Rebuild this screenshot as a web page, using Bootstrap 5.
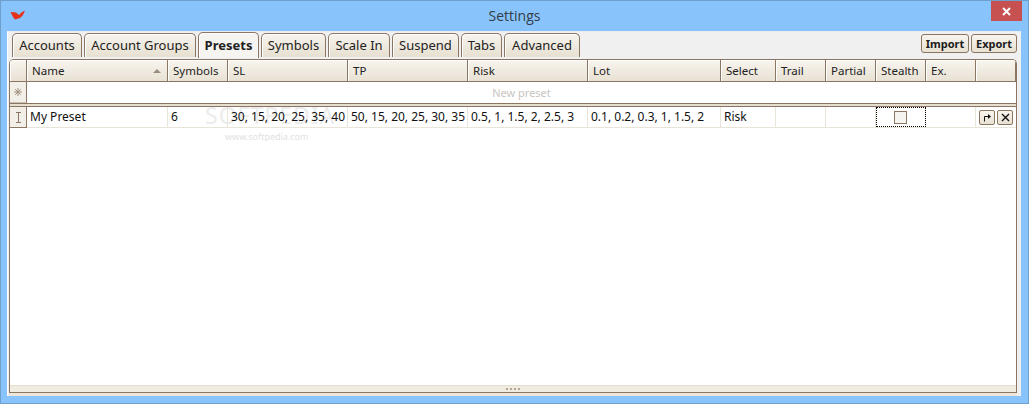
<!DOCTYPE html>
<html lang="en">
<head>
<meta charset="utf-8">
<title>Settings</title>
<link href="https://cdn.jsdelivr.net/npm/bootstrap@5.3.0/dist/css/bootstrap.min.css" rel="stylesheet">
<style>
html,body{margin:0;height:404px;overflow:hidden;background:#88c3fb;}
body{font-family:"Noto Sans","Liberation Sans",sans-serif;font-size:12px;color:#1c1c1c;}
.win{width:1029px;height:404px;border:1px solid #6f9fcb;background:#88c3fb;position:relative;}
.titlebar{height:30px;}
.win-title{font-family:"Open Sans","Noto Sans",sans-serif;font-size:14px;color:#333c47;line-height:30px;}
.logo-slot{width:60px;padding-left:9px;}
.app-logo{display:block;width:16px;height:10px;margin-top:-3px;}
.close-x{width:31px;height:20px;background:#c75050;margin:0 6px 0 23px;align-self:flex-start;}
.panel{margin:0 7px 0 6px;height:365px;background:#f0f0f0;border-left:1px solid #fff;border-top:1px solid #e6ecf2;padding:1px 4px 0 1px;}
.tabbar{height:26px;padding-left:3px;}
.wtab{height:24px;margin-right:2px;background:linear-gradient(#f7f4ee,#e7e0d1);border:1px solid #8b7563;border-bottom:0;border-radius:5px 5px 0 0;font-size:13px;color:#222;text-align:center;line-height:23px;box-shadow:inset 1px 1px 0 #fff;white-space:nowrap;}
.wtab.on{height:26px;margin-top:-1px;background:#f6f4f0;font-weight:700;line-height:25px;z-index:1;}
.t1{width:70px}.t2{width:112px}.t3{width:61px}.t4{width:65px}.t5{width:62px}.t6{width:67px}.t7{width:41px;}.t8{width:76px;}
.wbtn{height:19px;padding:0;background:linear-gradient(#f8f5ef,#e8e1d3);border:1px solid #8b7563;border-radius:3px;font-size:11px;font-weight:700;color:#1c1c1c;line-height:16px;}
.w-imp{width:48px;margin-right:2px}.w-exp{width:46px;}
.tbtns{margin-top:1px;}
.gridbox{height:333px;background:#fff;border:1px solid #8b7563;border-radius:5px 5px 0 0;border-bottom:0;width:1008px;position:relative;overflow:hidden;}
.grow{display:grid;grid-template-columns:17px 141px 60px 120px 120px 120px 133px 55px 50px 50px 50px 50px 40px;}
.hrow{height:22px;background:linear-gradient(#f8f5ef,#e8e1d3);border-bottom:1px solid #8b7563;font-size:11.5px;}
.hrow>div{border-right:1px solid #8b7563;padding-left:5px;line-height:21px;box-shadow:inset 1px 1px 0 #fff;position:relative;color:#222;white-space:nowrap;}
.hrow>div:first-child{padding:0}
.sort-up{position:absolute;right:6px;top:9px;border:4px solid transparent;border-top:0;border-bottom:4px solid #9b8c7c;width:0;height:0;}
.newrow{height:21px;display:flex;position:relative;}
.side{width:17px;background:#f2efe8;border-right:1px solid #8b7563;border-bottom:1px solid #c9bfb2;display:flex;align-items:center;justify-content:center;flex:none;}
.newtext{flex:1;text-align:center;color:#c9c5c0;font-size:11px;line-height:21px;}
.divbar{height:4px;background:#e6dfd0;border-top:1px solid #8b7563;border-bottom:1px solid #8b7563;}
.drow{height:21px;border-bottom:1px solid #e9e4d8;background:transparent;}
.drow>div{border-right:1px solid #e9e4d8;padding-left:3px;line-height:20px;position:relative;color:#111;white-space:nowrap;}
.drow>div.sidec{padding:0;background:#f2efe8;border-right:1px solid #8b7563;border-bottom:1px solid #8b7563;margin-bottom:-1px;display:flex;align-items:center;justify-content:center;}
.drow>div.focusc{padding:0;outline:1px dotted #000;outline-offset:-1px;display:flex;align-items:center;justify-content:center;}
.chk{width:13px;height:13px;background:#f6f4f0;border:1px solid #8b7563;display:block;}
.mini{width:16px;height:15px;background:linear-gradient(#f8f5ef,#e8e1d3);border:1px solid #8b7563;border-radius:2px;padding:0;display:flex;align-items:center;justify-content:center;}
.drow>div.acts{gap:2px;padding-left:3px;align-items:center;border-right:0;}
.foot{position:absolute;left:0;right:0;bottom:0;height:7px;background:#f1ece2;border-top:1px solid #e6dfd0;display:flex;justify-content:center;align-items:center;gap:2px;}
.dot{width:2px;height:2px;background:#b5a88f;}
.footline{height:4px;border-top:1px solid #8b7563;background:#ece6da;width:1008px;}
.wm{position:absolute;pointer-events:none;white-space:nowrap;}
.wm1{left:195px;top:38px;font-size:23px;letter-spacing:1px;color:#ececec;}
.wm2{left:215px;top:70px;font-size:9px;color:#e2e2e2;}
.drow,.divbar,.hrow{position:relative;z-index:1;}
</style>
</head>
<body>
<div class="win d-flex flex-column">
  <div class="titlebar d-flex align-items-center">
    <div class="logo-slot"><svg class="app-logo" viewBox="0 0 16 10"><path d="M.5 2L6 2.5L9 5L12 2L15 .5L13 5L10 8L5 9.5L3 7Z" fill="#e5301a"/></svg></div>
    <div class="win-title flex-grow-1 text-center">Settings</div>
    <div class="close-x d-flex align-items-center justify-content-center">
      <svg width="9" height="9" viewBox="0 0 9 9"><path d="M1 1L8 8M8 1L1 8" stroke="#fff" stroke-width="2"/></svg>
    </div>
  </div>
  <div class="panel">
    <div class="tabbar d-flex align-items-start">
      <div class="wtab t1">Accounts</div>
      <div class="wtab t2">Account Groups</div>
      <div class="wtab on t3">Presets</div>
      <div class="wtab t4">Symbols</div>
      <div class="wtab t5">Scale In</div>
      <div class="wtab t6">Suspend</div>
      <div class="wtab t7">Tabs</div>
      <div class="wtab t8">Advanced</div>
      <div class="ms-auto d-flex tbtns">
        <button class="wbtn w-imp" type="button">Import</button>
        <button class="wbtn w-exp" type="button">Export</button>
      </div>
    </div>
    <div class="gridbox">
      <div class="grow hrow">
        <div></div><div>Name<span class="sort-up"></span></div><div>Symbols</div><div>SL</div><div>TP</div><div>Risk</div><div>Lot</div><div>Select</div><div>Trail</div><div>Partial</div><div>Stealth</div><div>Ex.</div><div></div>
      </div>
      <div class="newrow">
        <div class="side"><svg width="8" height="8" viewBox="0 0 8 8"><path d="M4 0V8M0 4H8M1.2 1.2L6.8 6.8M6.8 1.2L1.2 6.8" stroke="#a08f7e" stroke-width="1"/></svg></div>
        <div class="newtext">New preset</div>
      </div>
      <div class="divbar"></div>
      <div class="grow drow">
        <div class="sidec"><svg width="7" height="11" viewBox="0 0 7 11"><path d="M1 .5H6M1 10.5H6M3.5 .5V10.5" stroke="#8b7563" fill="none"/></svg></div>
        <div>My Preset</div><div>6</div><div>30, 15, 20, 25, 35, 40</div><div>50, 15, 20, 25, 30, 35</div><div>0.5, 1, 1.5, 2, 2.5, 3</div><div>0.1, 0.2, 0.3, 1, 1.5, 2</div><div>Risk</div><div></div><div></div>
        <div class="focusc"><span class="chk"></span></div>
        <div></div>
        <div class="d-flex acts">
          <button class="mini" type="button" aria-label="Apply"><svg width="10" height="10" viewBox="0 0 10 10"><path d="M2.5 9.5V4.5H8" stroke="#111" fill="none"/><path d="M6 2L9 4.5L6 7Z" fill="#111"/></svg></button>
          <button class="mini" type="button" aria-label="Delete"><svg width="9" height="9" viewBox="0 0 9 9"><path d="M1 1L8 8M8 1L1 8" stroke="#111" stroke-width="1.4"/></svg></button>
        </div>
      </div>
      <div class="wm wm1">SOFTPEDIA</div>
      <div class="wm wm2">www.softpedia.com</div>
      <div class="foot"><span class="dot"></span><span class="dot"></span><span class="dot"></span><span class="dot"></span></div>
    </div>
    <div class="footline"></div>
  </div>
</div>
<script src="https://cdn.jsdelivr.net/npm/bootstrap@5.3.0/dist/js/bootstrap.bundle.min.js"></script>
</body>
</html>
